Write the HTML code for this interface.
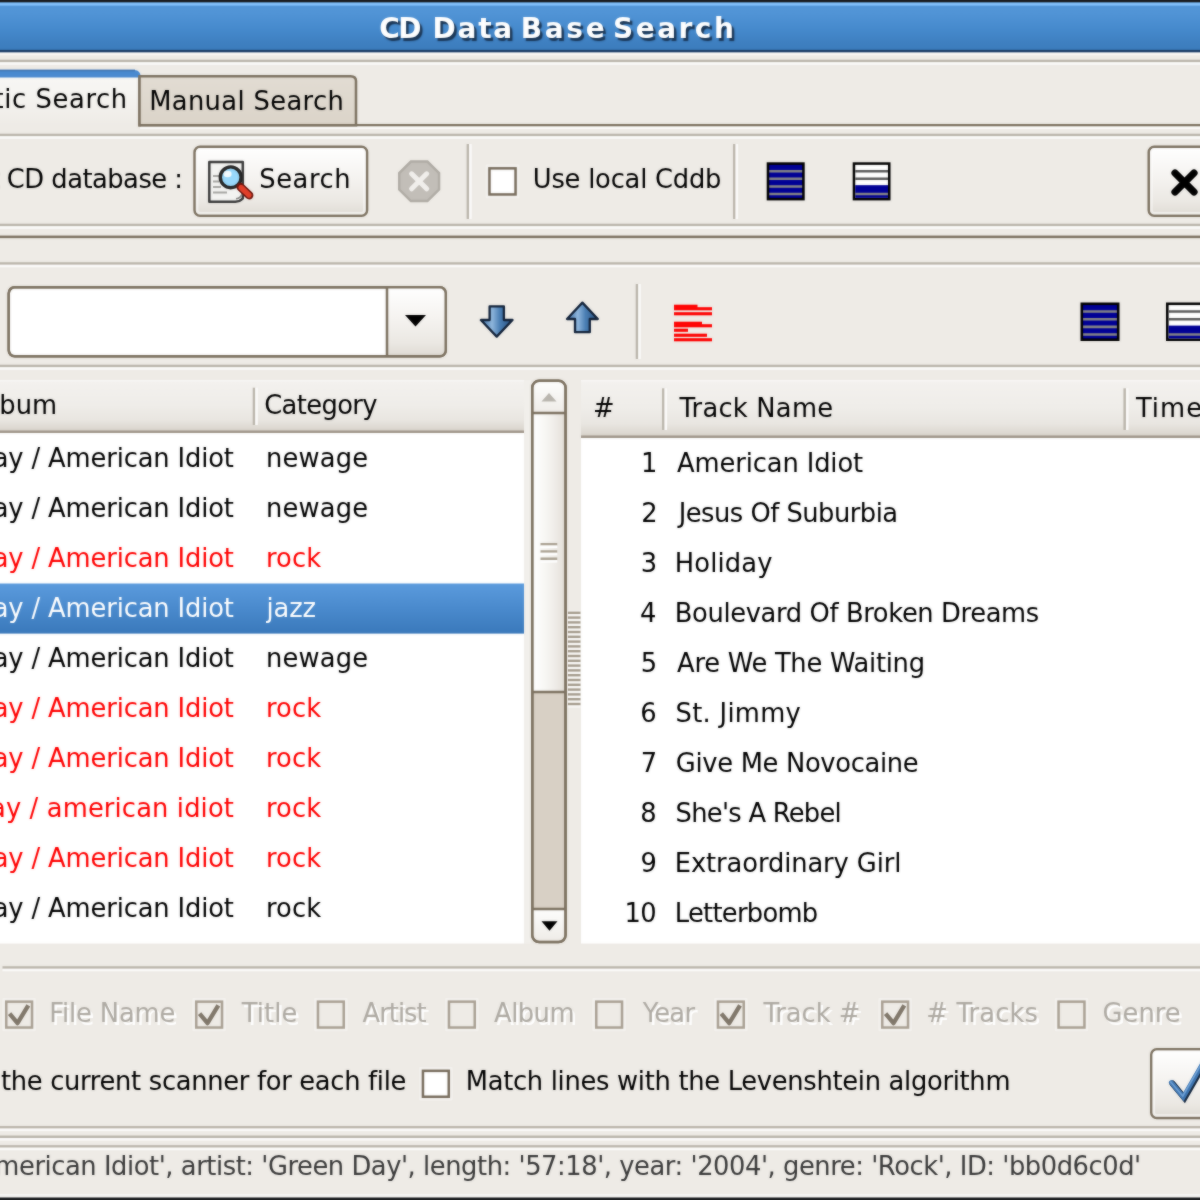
<!DOCTYPE html>
<html>
<head>
<meta charset="utf-8">
<title>CD Data Base Search</title>
<style>
html,body{margin:0;padding:0;background:#eeebe6;overflow:hidden;}
body{width:1200px;height:1200px;position:relative;}
#f,#f2{position:absolute;left:-50px;top:-50px;width:1300px;height:1300px;overflow:hidden;}
#f{filter:blur(0.8px);}
#f2{opacity:0.55;}
.w{position:absolute;left:50px;top:50px;width:480px;height:480px;transform:scale(2.5);transform-origin:0 0;}
.c{left:-20px;top:-20px;width:520px;height:520px;background:#eeebe6;overflow:hidden;}
.i{left:20px;top:20px;width:480px;height:480px;
  font-family:"DejaVu Sans","Liberation Sans",sans-serif;font-size:10.3px;line-height:16px;color:#000;}
.w div,.w svg{position:absolute;box-sizing:border-box;white-space:pre;}
.t span{white-space:pre;}
.t{height:16px;}
.dis{color:#aeaaa3;text-shadow:1px 1px 0 #fff;}
.r{color:#f00;}
.sel{color:#fff;}
</style>
</head>
<body>
<div id="f"><div class="w"><div class="c"><div class="i">
<svg width="480" height="480" viewBox="0 0 1200 1200" style="left:0;top:0;overflow:visible"><defs><linearGradient id="ag0" x1="0" y1="0" x2="0" y2="1"><stop offset="0" stop-color="#5497d8"/><stop offset="0.25" stop-color="#5194d6"/><stop offset="0.55" stop-color="#468acd"/><stop offset="0.8" stop-color="#3f80c1"/><stop offset="1" stop-color="#3b7bbb"/></linearGradient><linearGradient id="ag1" x1="0" y1="0" x2="0" y2="1"><stop offset="0" stop-color="#f8f7f5"/><stop offset="0.35" stop-color="#f6f5f2"/><stop offset="1" stop-color="#eeebe6"/></linearGradient><linearGradient id="ag2" x1="0" y1="0" x2="0" y2="1"><stop offset="0" stop-color="#e2dcd3"/><stop offset="1" stop-color="#dbd4c9"/></linearGradient><linearGradient id="ag3" x1="0" y1="0" x2="0" y2="1"><stop offset="0" stop-color="#ffffff"/><stop offset="0.45" stop-color="#f5f3f0"/><stop offset="0.8" stop-color="#ebe8e3"/><stop offset="1" stop-color="#dfdbd4"/></linearGradient><linearGradient id="ag4" x1="0" y1="0" x2="0" y2="1"><stop offset="0" stop-color="#ffffff"/><stop offset="0.45" stop-color="#f5f3f0"/><stop offset="0.8" stop-color="#ebe8e3"/><stop offset="1" stop-color="#dfdbd4"/></linearGradient><linearGradient id="ag5" x1="0" y1="0" x2="0" y2="1"><stop offset="0" stop-color="#ffffff"/><stop offset="0.45" stop-color="#f5f3f0"/><stop offset="0.8" stop-color="#ebe8e3"/><stop offset="1" stop-color="#dfdbd4"/></linearGradient><linearGradient id="ag6" x1="0" y1="0" x2="1" y2="0"><stop offset="0" stop-color="#3d6fa6"/><stop offset="0.35" stop-color="#8fb6dc"/><stop offset="0.6" stop-color="#4b7fb4"/><stop offset="1" stop-color="#28507f"/></linearGradient><linearGradient id="ag7" x1="0" y1="0" x2="0" y2="1"><stop offset="0" stop-color="#f9f8f7"/><stop offset="0.05" stop-color="#f3f1ee"/><stop offset="0.5" stop-color="#efede9"/><stop offset="0.78" stop-color="#e9e6e1"/><stop offset="1" stop-color="#d9d4cc"/></linearGradient><linearGradient id="ag8" x1="0" y1="0" x2="0" y2="1"><stop offset="0" stop-color="#5b9bdd"/><stop offset="0.5" stop-color="#4a8acd"/><stop offset="1" stop-color="#3a79bb"/></linearGradient><linearGradient id="ag9" x1="0" y1="0" x2="0" y2="1"><stop offset="0" stop-color="#fdfdfc"/><stop offset="1" stop-color="#efece8"/></linearGradient><linearGradient id="ag10" x1="0" y1="0" x2="1" y2="0"><stop offset="0" stop-color="#ffffff"/><stop offset="0.4" stop-color="#f7f6f3"/><stop offset="0.7" stop-color="#efece8"/><stop offset="1" stop-color="#e4e0d9"/></linearGradient><linearGradient id="ag11" x1="0" y1="0" x2="0" y2="1"><stop offset="0" stop-color="#f9f8f7"/><stop offset="0.05" stop-color="#f3f1ee"/><stop offset="0.5" stop-color="#efede9"/><stop offset="0.78" stop-color="#e9e6e1"/><stop offset="1" stop-color="#d9d4cc"/></linearGradient><linearGradient id="ag12" x1="0" y1="0" x2="0" y2="1"><stop offset="0" stop-color="#ffffff"/><stop offset="0.45" stop-color="#f5f3f0"/><stop offset="0.8" stop-color="#ebe8e3"/><stop offset="1" stop-color="#dfdbd4"/></linearGradient></defs>
<rect x="-50" y="0" width="1300" height="52.5" fill="url(#ag0)"/>
<rect x="-50" y="-50" width="1300" height="52.5" fill="#1a1c1f"/>
<rect x="-50" y="2.6" width="1300" height="3" fill="#82c0fb"/>
<rect x="-50" y="49.9" width="1300" height="2.6" fill="#1c3c64"/>
<rect x="-50" y="52.5" width="1300" height="2.7" fill="#fbf8f4"/>
<rect x="-50" y="59.75" width="1300" height="2.5" fill="#bab5ab"/><rect x="-50" y="62.25" width="1300" height="2.5" fill="#fcfbfa"/>
<rect x="140" y="124" width="1110" height="2.5" fill="#7d7261"/>
<rect x="140" y="126.5" width="1110" height="2.5" fill="#fcfbfa"/>
<path d="M-50 126.5V70H134.5Q140.75 70 140.75 76V126.5z" fill="url(#ag1)"/>
<path d="M-50 70H134.5Q140.75 70 140.75 77.5H-50z" fill="#4a8ad0"/>
<rect x="-50" y="69.6" width="185" height="1.8" fill="#3c74b3"/>
<rect x="138.25" y="77" width="2.5" height="49.5" fill="#7d7261"/>
<path d="M139.5 125.2V76.25H350.5Q356 76.25 356 81V125.2z" fill="url(#ag2)" stroke="#7d7261" stroke-width="2.5"/>
<rect x="-50" y="133.75" width="1300" height="2.5" fill="#bab5ab"/><rect x="-50" y="136.25" width="1300" height="2.5" fill="#fcfbfa"/>
<rect x="194.55" y="146.75" width="172.5" height="69" fill="url(#ag3)" stroke="#7d7261" stroke-width="2.5" rx="5.5"/><rect x="197.05" y="149.25" width="167.5" height="64" fill="none" stroke="#fff" stroke-opacity=".55" stroke-width="2.5" rx="3"/>
<path d="M209.3 162h33.5v36.5q-3 3.2-7.5 3.2h-26z" fill="#f3f3f1" stroke="#3a3a3a" stroke-width="2.5" stroke-linejoin="round"/><path d="M213 176h7M213 181.5h6M213 187h8M213 192.5h14" stroke="#a5a5a2" stroke-width="2"/><path d="M236 198.8q5-0.6 6.2-5.6" fill="none" stroke="#8a8a88" stroke-width="1.6"/><circle cx="230.7" cy="177.3" r="10.4" fill="#98d8fb" stroke="#262626" stroke-width="3.4"/><ellipse cx="227.6" cy="174" rx="4" ry="3.2" fill="#f2fbff"/><path d="M240.5 187l8.7 8.3" stroke="#6f150c" stroke-width="8.4" stroke-linecap="round"/><path d="M241 187.5l8 7.6" stroke="#e2402a" stroke-width="5.2" stroke-linecap="round"/>
<g transform="translate(397.3,159.6) scale(2.4278,2.4111)"><path d="M5.6 0.8h6.8l4.8 4.8v6.8l-4.8 4.8h-6.8l-4.8-4.8v-6.8z" fill="#c2beb8" stroke="#b0aca5" stroke-width="1"/><path d="M5.9 5.9l6.2 6.2M12.1 5.9l-6.2 6.2" stroke="#f1efec" stroke-width="2.1" stroke-linecap="round"/></g>
<rect x="466.65" y="144" width="2.5" height="75" fill="#bab5ab"/><rect x="469.15" y="144" width="2.5" height="75" fill="#fcfbfa"/>
<rect x="485.7" y="164.6" width="33.6" height="33.6" fill="#fff" rx="1" fill-opacity=".35"/><rect x="489.45" y="168.35" width="26.1" height="26.1" fill="#fff" stroke="#776c5c" stroke-width="2.5"/>
<rect x="733.05" y="144" width="2.5" height="75" fill="#bab5ab"/><rect x="735.55" y="144" width="2.5" height="75" fill="#fcfbfa"/>
<g transform="translate(766.7,162.3) scale(2.5333,2.5400)"><rect width="15" height="15" fill="#000"/><rect x="1" y="1" width="13" height="13" fill="#000096"/><path d="M1 3.5h13M1 6.5h13M1 9.5h13M1 12.5h13" stroke="#858585" stroke-width="1"/></g>
<g transform="translate(852.7,162.3) scale(2.5200,2.5400)"><rect width="15" height="15" fill="#000"/><rect x="1" y="1" width="13" height="13" fill="#fff"/><rect x="1" y="9" width="13" height="5" fill="#000096"/><path d="M1 3.5h13M1 6.5h13" stroke="#5a5a5a" stroke-width="1"/><path d="M1 12.5h13" stroke="#858585" stroke-width="1"/></g>
<rect x="1148.75" y="146.75" width="110" height="69" fill="url(#ag4)" stroke="#7d7261" stroke-width="2.5" rx="5.5"/><rect x="1151.25" y="149.25" width="105" height="64" fill="none" stroke="#fff" stroke-opacity=".55" stroke-width="2.5" rx="3"/>
<path d="M1175 173l19 19M1194 173l-19 19" stroke="#000" stroke-width="7.2" stroke-linecap="round"/>
<rect x="-50" y="223.75" width="1300" height="2.5" fill="#bab5ab"/><rect x="-50" y="226.25" width="1300" height="2.5" fill="#fcfbfa"/>
<rect x="-50" y="235.6" width="1300" height="2.5" fill="#7d7261"/>
<rect x="-50" y="262.25" width="1300" height="2.5" fill="#bab5ab"/><rect x="-50" y="264.75" width="1300" height="2.5" fill="#fcfbfa"/>
<rect x="8.75" y="287.25" width="437" height="69.1" fill="#fff" stroke="#7d7261" stroke-width="2.5" rx="6"/>
<path d="M387 287.2H439.5Q445.8 287.2 445.8 293V350.5Q445.8 356.4 439.5 356.4H387z" fill="url(#ag5)"/>
<rect x="385.75" y="287" width="2.5" height="69.6" fill="#7d7261"/>
<rect x="8.75" y="287.25" width="437" height="69.1" fill="none" stroke="#7d7261" stroke-width="2.5" rx="6"/>
<path d="M405 315h21l-10.5 11.6z" fill="#000"/>
<path d="M489.6 306.4h14.3v13.6h8.6l-15.8 16.6l-15.8-16.6h8.7z" fill="url(#ag6)" stroke="#13233a" stroke-width="2.3" stroke-linejoin="round"/>
<path d="M575 332.2h14.8v-13.2h8l-15.4-16.4l-15.4 16.4h8z" fill="url(#ag6)" stroke="#13233a" stroke-width="2.3" stroke-linejoin="round"/>
<rect x="635.75" y="284" width="2.5" height="75" fill="#bab5ab"/><rect x="638.25" y="284" width="2.5" height="75" fill="#fcfbfa"/>
<rect x="674" y="304.7" width="23.5" height="3.1" fill="#f00"/><rect x="674" y="307.2" width="38" height="3.1" fill="#f00"/><rect x="674" y="312.2" width="38" height="3.1" fill="#f00"/><rect x="674" y="321.7" width="28" height="3.1" fill="#f00"/><rect x="674" y="324.2" width="38" height="3.1" fill="#f00"/><rect x="674" y="328.7" width="14" height="3.1" fill="#f00"/><rect x="674" y="333.7" width="33" height="3.1" fill="#f00"/><rect x="674" y="338.2" width="38" height="3.1" fill="#f00"/>
<g transform="translate(1080.5,302.5) scale(2.6000,2.5667)"><rect width="15" height="15" fill="#000"/><rect x="1" y="1" width="13" height="13" fill="#000096"/><path d="M1 3.5h13M1 6.5h13M1 9.5h13M1 12.5h13" stroke="#858585" stroke-width="1"/></g>
<g transform="translate(1166,302.5) scale(2.6000,2.5667)"><rect width="15" height="15" fill="#000"/><rect x="1" y="1" width="13" height="13" fill="#fff"/><rect x="1" y="9" width="13" height="5" fill="#000096"/><path d="M1 3.5h13M1 6.5h13" stroke="#5a5a5a" stroke-width="1"/><path d="M1 12.5h13" stroke="#858585" stroke-width="1"/></g>
<rect x="-50" y="364.75" width="1300" height="2.5" fill="#bab5ab"/><rect x="-50" y="367.25" width="1300" height="2.5" fill="#fcfbfa"/>
<rect x="-50" y="380" width="574" height="563.5" fill="#fff"/>
<rect x="-50" y="380" width="574" height="51" fill="url(#ag7)"/>
<rect x="-50" y="430.5" width="574" height="2.5" fill="#a0968a"/>
<rect x="252.75" y="387.7" width="2.5" height="37.3" fill="#bab5ab"/><rect x="255.25" y="387.7" width="2.5" height="37.3" fill="#fcfbfa"/>
<rect x="-50" y="583.5" width="574" height="50.1" fill="url(#ag8)"/>
<rect x="524" y="380" width="7" height="563.5" fill="#f1efeb"/>
<rect x="532.25" y="380.75" width="33.3" height="561.3" fill="#d8d0c5" stroke="#7d7261" stroke-width="2.5" rx="7"/>
<path d="M533.5 413V387.5Q533.5 382 539 382H558.8Q564.3 382 564.3 387.5V413z" fill="url(#ag9)"/>
<rect x="533.5" y="413" width="30.8" height="279" fill="url(#ag10)"/>
<path d="M533.5 909V935.3Q533.5 940.8 539 940.8H558.8Q564.3 940.8 564.3 935.3V909z" fill="url(#ag9)"/>
<rect x="532" y="411.75" width="33.8" height="2.5" fill="#7d7261"/>
<rect x="532" y="690.75" width="33.8" height="2.5" fill="#7d7261"/>
<rect x="532" y="907.75" width="33.8" height="2.5" fill="#7d7261"/>
<rect x="532.25" y="380.75" width="33.3" height="561.3" fill="none" stroke="#7d7261" stroke-width="2.5" rx="7"/>
<path d="M541.5 401.5h15l-7.5-8.5z" fill="#b9b5ae"/>
<path d="M541.5 921.3h16l-8 9.5z" fill="#000"/>
<rect x="540.5" y="543" width="16.75" height="2.5" fill="#aaa192"/>
<rect x="540.5" y="545.5" width="16.75" height="2.5" fill="#fff"/>
<rect x="540.5" y="550.25" width="16.75" height="2.5" fill="#aaa192"/>
<rect x="540.5" y="552.75" width="16.75" height="2.5" fill="#fff"/>
<rect x="540.5" y="557.5" width="16.75" height="2.5" fill="#aaa192"/>
<rect x="540.5" y="560" width="16.75" height="2.5" fill="#fff"/>
<rect x="567.7" y="610.5" width="12.8" height="97" fill="#faf9f7"/>
<rect x="567.9" y="702.8" width="12.6" height="2.4" fill="#a49b8c"/>
<rect x="567.9" y="698" width="12.6" height="2.4" fill="#a49b8c"/>
<rect x="567.9" y="693.2" width="12.6" height="2.4" fill="#a49b8c"/>
<rect x="567.9" y="688.4" width="12.6" height="2.4" fill="#a49b8c"/>
<rect x="567.9" y="683.6" width="12.6" height="2.4" fill="#a49b8c"/>
<rect x="567.9" y="678.8" width="12.6" height="2.4" fill="#a49b8c"/>
<rect x="567.9" y="674" width="12.6" height="2.4" fill="#a49b8c"/>
<rect x="567.9" y="669.2" width="12.6" height="2.4" fill="#a49b8c"/>
<rect x="567.9" y="664.4" width="12.6" height="2.4" fill="#a49b8c"/>
<rect x="567.9" y="659.6" width="12.6" height="2.4" fill="#a49b8c"/>
<rect x="567.9" y="654.8" width="12.6" height="2.4" fill="#a49b8c"/>
<rect x="567.9" y="650" width="12.6" height="2.4" fill="#a49b8c"/>
<rect x="567.9" y="645.2" width="12.6" height="2.4" fill="#a49b8c"/>
<rect x="567.9" y="640.4" width="12.6" height="2.4" fill="#a49b8c"/>
<rect x="567.9" y="635.6" width="12.6" height="2.4" fill="#a49b8c"/>
<rect x="567.9" y="630.8" width="12.6" height="2.4" fill="#a49b8c"/>
<rect x="567.9" y="626" width="12.6" height="2.4" fill="#a49b8c"/>
<rect x="567.9" y="621.2" width="12.6" height="2.4" fill="#a49b8c"/>
<rect x="567.9" y="616.4" width="12.6" height="2.4" fill="#a49b8c"/>
<rect x="567.9" y="611.6" width="12.6" height="2.4" fill="#a49b8c"/>
<rect x="581" y="380" width="669" height="563.5" fill="#fff"/>
<rect x="581" y="380" width="669" height="56" fill="url(#ag11)"/>
<rect x="581" y="435.5" width="669" height="2.5" fill="#a0968a"/>
<rect x="662.05" y="388.3" width="2.5" height="41.7" fill="#bab5ab"/><rect x="664.55" y="388.3" width="2.5" height="41.7" fill="#fcfbfa"/>
<rect x="1123.45" y="388.3" width="2.5" height="41.7" fill="#bab5ab"/><rect x="1125.95" y="388.3" width="2.5" height="41.7" fill="#fcfbfa"/>
<rect x="2.5" y="966.25" width="1247.5" height="2.5" fill="#bab5ab"/><rect x="2.5" y="968.75" width="1247.5" height="2.5" fill="#fcfbfa"/>
<rect x="2.5" y="997.9" width="33.3" height="33.4" fill="#fff" rx="1" fill-opacity=".35"/><rect x="6.25" y="1001.65" width="25.8" height="25.9" fill="#eeebe6" stroke="#a9a093" stroke-width="2.5"/><path d="M9.6 1013.6l7.9 9.6l10.8-17.9" fill="none" stroke="#80776a" stroke-width="4.3" stroke-linejoin="round"/>
<rect x="192.5" y="997.9" width="33.3" height="33.4" fill="#fff" rx="1" fill-opacity=".35"/><rect x="196.25" y="1001.65" width="25.8" height="25.9" fill="#eeebe6" stroke="#a9a093" stroke-width="2.5"/><path d="M199.6 1013.6l7.9 9.6l10.8-17.9" fill="none" stroke="#80776a" stroke-width="4.3" stroke-linejoin="round"/>
<rect x="314.2" y="997.9" width="33.3" height="33.4" fill="#fff" rx="1" fill-opacity=".35"/><rect x="317.95" y="1001.65" width="25.8" height="25.9" fill="#eeebe6" stroke="#a9a093" stroke-width="2.5"/>
<rect x="445.2" y="997.9" width="33.3" height="33.4" fill="#fff" rx="1" fill-opacity=".35"/><rect x="448.95" y="1001.65" width="25.8" height="25.9" fill="#eeebe6" stroke="#a9a093" stroke-width="2.5"/>
<rect x="592.5" y="997.9" width="33.3" height="33.4" fill="#fff" rx="1" fill-opacity=".35"/><rect x="596.25" y="1001.65" width="25.8" height="25.9" fill="#eeebe6" stroke="#a9a093" stroke-width="2.5"/>
<rect x="714.2" y="997.9" width="33.3" height="33.4" fill="#fff" rx="1" fill-opacity=".35"/><rect x="717.95" y="1001.65" width="25.8" height="25.9" fill="#eeebe6" stroke="#a9a093" stroke-width="2.5"/><path d="M721.3 1013.6l7.9 9.6l10.8-17.9" fill="none" stroke="#80776a" stroke-width="4.3" stroke-linejoin="round"/>
<rect x="878.5" y="997.9" width="33.3" height="33.4" fill="#fff" rx="1" fill-opacity=".35"/><rect x="882.25" y="1001.65" width="25.8" height="25.9" fill="#eeebe6" stroke="#a9a093" stroke-width="2.5"/><path d="M885.6 1013.6l7.9 9.6l10.8-17.9" fill="none" stroke="#80776a" stroke-width="4.3" stroke-linejoin="round"/>
<rect x="1054.8" y="997.9" width="33.4" height="33.4" fill="#fff" rx="1" fill-opacity=".35"/><rect x="1058.55" y="1001.65" width="25.9" height="25.9" fill="#eeebe6" stroke="#a9a093" stroke-width="2.5"/>
<rect x="419.2" y="1067.1" width="33.3" height="33.4" fill="#fff" rx="1" fill-opacity=".35"/><rect x="422.95" y="1070.85" width="25.8" height="25.9" fill="#fff" stroke="#776c5c" stroke-width="2.5"/>
<rect x="1151.25" y="1049.25" width="107.5" height="68.7" fill="url(#ag12)" stroke="#7d7261" stroke-width="2.5" rx="5.5"/><rect x="1153.75" y="1051.75" width="102.5" height="63.7" fill="none" stroke="#fff" stroke-opacity=".55" stroke-width="2.5" rx="3"/>
<path d="M1172.5 1083.5l12 14.6l22-38" fill="none" stroke="#182a40" stroke-width="6" stroke-linecap="round" stroke-linejoin="miter"/><path d="M1171.3 1082.5l12 14.6l22-38" fill="none" stroke="#3f76b2" stroke-width="4.8" stroke-linecap="round" stroke-linejoin="miter"/><path d="M1170.8 1082l12 14l22-38" fill="none" stroke="#6d9fd3" stroke-width="1.6" stroke-linecap="round" stroke-linejoin="miter"/>
<rect x="-50" y="1126.05" width="1300" height="2.5" fill="#bab5ab"/><rect x="-50" y="1128.55" width="1300" height="2.5" fill="#fcfbfa"/>
<rect x="-50" y="1135.55" width="1300" height="2.5" fill="#bab5ab"/><rect x="-50" y="1138.05" width="1300" height="2.5" fill="#fcfbfa"/>
<rect x="-50" y="1145.15" width="1300" height="2.5" fill="#bab5ab"/><rect x="-50" y="1147.65" width="1300" height="2.5" fill="#fcfbfa"/>
<rect x="-50" y="1194" width="1300" height="3.5" fill="#f6f5f3"/>
<rect x="-50" y="1197.5" width="1300" height="52.5" fill="#1a1c1f"/>
</svg>
<div class="t" style="left:0;top:0;transform:translate(151.722px,4.320px);letter-spacing:0.5137px;color:#fff;text-shadow:1px 1px 0.5px #1a3554;font-size:11.2px;font-weight:bold;"><span style="letter-spacing:-0.6370px">CD</span><span style="display:inline-block;position:static;width:5.024px;letter-spacing:0"> </span><span style="letter-spacing:0.7247px">Data</span><span style="display:inline-block;position:static;width:2.687px;letter-spacing:0"> </span><span style="letter-spacing:1.0805px">Base</span><span style="display:inline-block;position:static;width:2.254px;letter-spacing:0"> </span><span style="letter-spacing:1.0093px">Search</span></div>
<div class="t" style="left:0;top:0;transform:translate(-44.340px,31.320px);letter-spacing:0.2487px;">Automatic Search</div>
<div class="t" style="left:0;top:0;transform:translate(59.669px,32.000px);letter-spacing:0.1507px;">Manual Search</div>
<div class="t" style="left:0;top:0;transform:translate(-40.758px,63.320px);letter-spacing:-0.2012px;">Request CD database :</div>
<div class="t" style="left:0;top:0;transform:translate(103.721px,63.320px);letter-spacing:0.2167px;">Search</div>
<div class="t" style="left:0;top:0;transform:translate(213.105px,63.320px);letter-spacing:-0.0861px;">Use local Cddb</div>
<div class="t" style="left:0;top:0;transform:translate(-47.958px,153.720px);letter-spacing:0.0184px;">Artist / Album</div>
<div class="t" style="left:0;top:0;transform:translate(105.702px,153.720px);letter-spacing:-0.2517px;">Category</div>
<div class="t" style="left:0;top:0;transform:translate(-44.908px,174.680px);letter-spacing:-0.0554px;">Green Day / American Idiot</div>
<div class="t" style="left:0;top:0;transform:translate(106.385px,174.680px);letter-spacing:0.0750px;">newage</div>
<div class="t" style="left:0;top:0;transform:translate(-44.908px,194.680px);letter-spacing:-0.0554px;">Green Day / American Idiot</div>
<div class="t" style="left:0;top:0;transform:translate(106.385px,194.680px);letter-spacing:0.0750px;">newage</div>
<div class="t r" style="left:0;top:0;transform:translate(-44.908px,214.680px);letter-spacing:-0.0554px;">Green Day / American Idiot</div>
<div class="t r" style="left:0;top:0;transform:translate(106.385px,214.680px);letter-spacing:0.0360px;">rock</div>
<div class="t sel" style="left:0;top:0;transform:translate(-44.908px,234.680px);letter-spacing:-0.0554px;">Green Day / American Idiot</div>
<div class="t sel" style="left:0;top:0;transform:translate(106.586px,234.680px);letter-spacing:-0.0426px;">jazz</div>
<div class="t" style="left:0;top:0;transform:translate(-44.908px,254.680px);letter-spacing:-0.0554px;">Green Day / American Idiot</div>
<div class="t" style="left:0;top:0;transform:translate(106.385px,254.680px);letter-spacing:0.0750px;">newage</div>
<div class="t r" style="left:0;top:0;transform:translate(-44.908px,274.680px);letter-spacing:-0.0554px;">Green Day / American Idiot</div>
<div class="t r" style="left:0;top:0;transform:translate(106.385px,274.680px);letter-spacing:0.0360px;">rock</div>
<div class="t r" style="left:0;top:0;transform:translate(-44.908px,294.680px);letter-spacing:-0.0554px;">Green Day / American Idiot</div>
<div class="t r" style="left:0;top:0;transform:translate(106.385px,294.680px);letter-spacing:0.0360px;">rock</div>
<div class="t r" style="left:0;top:0;transform:translate(-43.936px,314.680px);letter-spacing:0.0557px;">green day / american idiot</div>
<div class="t r" style="left:0;top:0;transform:translate(106.385px,314.680px);letter-spacing:0.0360px;">rock</div>
<div class="t r" style="left:0;top:0;transform:translate(-44.908px,334.680px);letter-spacing:-0.0554px;">Green Day / American Idiot</div>
<div class="t r" style="left:0;top:0;transform:translate(106.385px,334.680px);letter-spacing:0.0360px;">rock</div>
<div class="t" style="left:0;top:0;transform:translate(-44.908px,354.680px);letter-spacing:-0.0554px;">Green Day / American Idiot</div>
<div class="t" style="left:0;top:0;transform:translate(106.385px,354.680px);letter-spacing:0.0360px;">rock</div>
<div class="t" style="left:0;top:0;transform:translate(237.205px,154.680px);letter-spacing:0.0000px;">#</div>
<div class="t" style="left:0;top:0;transform:translate(271.750px,154.680px);letter-spacing:0.0965px;">Track Name</div>
<div class="t" style="left:0;top:0;transform:translate(454.350px,154.680px);letter-spacing:0.4250px;">Time</div>
<div class="t" style="left:0;top:0;transform:translate(256.388px,176.680px);letter-spacing:-0.2000px;">1</div>
<div class="t" style="left:0;top:0;transform:translate(270.840px,176.680px);letter-spacing:-0.0492px;">American Idiot</div>
<div class="t" style="left:0;top:0;transform:translate(256.469px,196.680px);letter-spacing:-0.2000px;">2</div>
<div class="t" style="left:0;top:0;transform:translate(271.453px,196.680px);letter-spacing:-0.1979px;">Jesus Of Suburbia</div>
<div class="t" style="left:0;top:0;transform:translate(256.262px,216.680px);letter-spacing:-0.2000px;">3</div>
<div class="t" style="left:0;top:0;transform:translate(269.909px,216.680px);letter-spacing:0.0598px;">Holiday</div>
<div class="t" style="left:0;top:0;transform:translate(256.016px,236.680px);letter-spacing:-0.2000px;">4</div>
<div class="t" style="left:0;top:0;transform:translate(269.909px,236.680px);letter-spacing:-0.1457px;">Boulevard Of Broken Dreams</div>
<div class="t" style="left:0;top:0;transform:translate(256.338px,256.680px);letter-spacing:-0.2000px;">5</div>
<div class="t" style="left:0;top:0;transform:translate(270.840px,256.680px);letter-spacing:-0.1036px;">Are We The Waiting</div>
<div class="t" style="left:0;top:0;transform:translate(256.086px,276.680px);letter-spacing:-0.2000px;">6</div>
<div class="t" style="left:0;top:0;transform:translate(270.241px,276.680px);letter-spacing:0.1117px;">St. Jimmy</div>
<div class="t" style="left:0;top:0;transform:translate(256.318px,296.680px);letter-spacing:-0.2000px;">7</div>
<div class="t" style="left:0;top:0;transform:translate(270.342px,296.680px);letter-spacing:-0.1249px;">Give Me Novocaine</div>
<div class="t" style="left:0;top:0;transform:translate(256.142px,316.680px);letter-spacing:-0.2000px;">8</div>
<div class="t" style="left:0;top:0;transform:translate(270.241px,316.680px);letter-spacing:-0.2924px;">She's A Rebel</div>
<div class="t" style="left:0;top:0;transform:translate(256.162px,336.680px);letter-spacing:-0.2000px;">9</div>
<div class="t" style="left:0;top:0;transform:translate(269.909px,336.680px);letter-spacing:-0.0386px;">Extraordinary Girl</div>
<div class="t" style="left:0;top:0;transform:translate(249.775px,356.680px);letter-spacing:-0.2000px;">10</div>
<div class="t" style="left:0;top:0;transform:translate(269.909px,356.680px);letter-spacing:-0.2893px;">Letterbomb</div>
<div class="t dis" style="left:0;top:0;transform:translate(19.669px,396.920px);letter-spacing:-0.0514px;">File Name</div>
<div class="t dis" style="left:0;top:0;transform:translate(96.710px,396.920px);letter-spacing:0.0400px;">Title</div>
<div class="t dis" style="left:0;top:0;transform:translate(145.000px,396.920px);letter-spacing:-0.3862px;">Artist</div>
<div class="t dis" style="left:0;top:0;transform:translate(197.640px,396.920px);letter-spacing:-0.2111px;">Album</div>
<div class="t dis" style="left:0;top:0;transform:translate(257.100px,396.920px);letter-spacing:-0.3042px;">Year</div>
<div class="t dis" style="left:0;top:0;transform:translate(305.350px,396.920px);letter-spacing:-0.0167px;">Track #</div>
<div class="t dis" style="left:0;top:0;transform:translate(370.525px,396.920px);letter-spacing:0.0627px;"># Tracks</div>
<div class="t dis" style="left:0;top:0;transform:translate(441.022px,396.920px);letter-spacing:0.0148px;">Genre</div>
<div class="t" style="left:0;top:0;transform:translate(-22.140px,424.000px);letter-spacing:-0.1219px;">Run the current scanner for each file</div>
<div class="t" style="left:0;top:0;transform:translate(186.309px,424.000px);letter-spacing:-0.1167px;">Match lines with the Levenshtein algorithm</div>
<div class="t" style="left:0;top:0;transform:translate(-50.301px,457.800px);letter-spacing:-0.1746px;color:#3a3a3a;">Album: 'American Idiot', artist: 'Green Day', length: '57:18', year: '2004', genre: 'Rock', ID: 'bb0d6c0d'</div>
</div></div></div></div>
<div id="f2"><div class="w"><div class="c"><div class="i">
<svg width="480" height="480" viewBox="0 0 1200 1200" style="left:0;top:0;overflow:visible"><defs><linearGradient id="bg0" x1="0" y1="0" x2="0" y2="1"><stop offset="0" stop-color="#5497d8"/><stop offset="0.25" stop-color="#5194d6"/><stop offset="0.55" stop-color="#468acd"/><stop offset="0.8" stop-color="#3f80c1"/><stop offset="1" stop-color="#3b7bbb"/></linearGradient><linearGradient id="bg1" x1="0" y1="0" x2="0" y2="1"><stop offset="0" stop-color="#f8f7f5"/><stop offset="0.35" stop-color="#f6f5f2"/><stop offset="1" stop-color="#eeebe6"/></linearGradient><linearGradient id="bg2" x1="0" y1="0" x2="0" y2="1"><stop offset="0" stop-color="#e2dcd3"/><stop offset="1" stop-color="#dbd4c9"/></linearGradient><linearGradient id="bg3" x1="0" y1="0" x2="0" y2="1"><stop offset="0" stop-color="#ffffff"/><stop offset="0.45" stop-color="#f5f3f0"/><stop offset="0.8" stop-color="#ebe8e3"/><stop offset="1" stop-color="#dfdbd4"/></linearGradient><linearGradient id="bg4" x1="0" y1="0" x2="0" y2="1"><stop offset="0" stop-color="#ffffff"/><stop offset="0.45" stop-color="#f5f3f0"/><stop offset="0.8" stop-color="#ebe8e3"/><stop offset="1" stop-color="#dfdbd4"/></linearGradient><linearGradient id="bg5" x1="0" y1="0" x2="0" y2="1"><stop offset="0" stop-color="#ffffff"/><stop offset="0.45" stop-color="#f5f3f0"/><stop offset="0.8" stop-color="#ebe8e3"/><stop offset="1" stop-color="#dfdbd4"/></linearGradient><linearGradient id="bg6" x1="0" y1="0" x2="1" y2="0"><stop offset="0" stop-color="#3d6fa6"/><stop offset="0.35" stop-color="#8fb6dc"/><stop offset="0.6" stop-color="#4b7fb4"/><stop offset="1" stop-color="#28507f"/></linearGradient><linearGradient id="bg7" x1="0" y1="0" x2="0" y2="1"><stop offset="0" stop-color="#f9f8f7"/><stop offset="0.05" stop-color="#f3f1ee"/><stop offset="0.5" stop-color="#efede9"/><stop offset="0.78" stop-color="#e9e6e1"/><stop offset="1" stop-color="#d9d4cc"/></linearGradient><linearGradient id="bg8" x1="0" y1="0" x2="0" y2="1"><stop offset="0" stop-color="#5b9bdd"/><stop offset="0.5" stop-color="#4a8acd"/><stop offset="1" stop-color="#3a79bb"/></linearGradient><linearGradient id="bg9" x1="0" y1="0" x2="0" y2="1"><stop offset="0" stop-color="#fdfdfc"/><stop offset="1" stop-color="#efece8"/></linearGradient><linearGradient id="bg10" x1="0" y1="0" x2="1" y2="0"><stop offset="0" stop-color="#ffffff"/><stop offset="0.4" stop-color="#f7f6f3"/><stop offset="0.7" stop-color="#efece8"/><stop offset="1" stop-color="#e4e0d9"/></linearGradient><linearGradient id="bg11" x1="0" y1="0" x2="0" y2="1"><stop offset="0" stop-color="#f9f8f7"/><stop offset="0.05" stop-color="#f3f1ee"/><stop offset="0.5" stop-color="#efede9"/><stop offset="0.78" stop-color="#e9e6e1"/><stop offset="1" stop-color="#d9d4cc"/></linearGradient><linearGradient id="bg12" x1="0" y1="0" x2="0" y2="1"><stop offset="0" stop-color="#ffffff"/><stop offset="0.45" stop-color="#f5f3f0"/><stop offset="0.8" stop-color="#ebe8e3"/><stop offset="1" stop-color="#dfdbd4"/></linearGradient></defs>
<rect x="-50" y="0" width="1300" height="52.5" fill="url(#bg0)"/>
<rect x="-50" y="-50" width="1300" height="52.5" fill="#1a1c1f"/>
<rect x="-50" y="2.6" width="1300" height="3" fill="#82c0fb"/>
<rect x="-50" y="49.9" width="1300" height="2.6" fill="#1c3c64"/>
<rect x="-50" y="52.5" width="1300" height="2.7" fill="#fbf8f4"/>
<rect x="-50" y="59.75" width="1300" height="2.5" fill="#bab5ab"/><rect x="-50" y="62.25" width="1300" height="2.5" fill="#fcfbfa"/>
<rect x="140" y="124" width="1110" height="2.5" fill="#7d7261"/>
<rect x="140" y="126.5" width="1110" height="2.5" fill="#fcfbfa"/>
<path d="M-50 126.5V70H134.5Q140.75 70 140.75 76V126.5z" fill="url(#bg1)"/>
<path d="M-50 70H134.5Q140.75 70 140.75 77.5H-50z" fill="#4a8ad0"/>
<rect x="-50" y="69.6" width="185" height="1.8" fill="#3c74b3"/>
<rect x="138.25" y="77" width="2.5" height="49.5" fill="#7d7261"/>
<path d="M139.5 125.2V76.25H350.5Q356 76.25 356 81V125.2z" fill="url(#bg2)" stroke="#7d7261" stroke-width="2.5"/>
<rect x="-50" y="133.75" width="1300" height="2.5" fill="#bab5ab"/><rect x="-50" y="136.25" width="1300" height="2.5" fill="#fcfbfa"/>
<rect x="194.55" y="146.75" width="172.5" height="69" fill="url(#bg3)" stroke="#7d7261" stroke-width="2.5" rx="5.5"/><rect x="197.05" y="149.25" width="167.5" height="64" fill="none" stroke="#fff" stroke-opacity=".55" stroke-width="2.5" rx="3"/>
<path d="M209.3 162h33.5v36.5q-3 3.2-7.5 3.2h-26z" fill="#f3f3f1" stroke="#3a3a3a" stroke-width="2.5" stroke-linejoin="round"/><path d="M213 176h7M213 181.5h6M213 187h8M213 192.5h14" stroke="#a5a5a2" stroke-width="2"/><path d="M236 198.8q5-0.6 6.2-5.6" fill="none" stroke="#8a8a88" stroke-width="1.6"/><circle cx="230.7" cy="177.3" r="10.4" fill="#98d8fb" stroke="#262626" stroke-width="3.4"/><ellipse cx="227.6" cy="174" rx="4" ry="3.2" fill="#f2fbff"/><path d="M240.5 187l8.7 8.3" stroke="#6f150c" stroke-width="8.4" stroke-linecap="round"/><path d="M241 187.5l8 7.6" stroke="#e2402a" stroke-width="5.2" stroke-linecap="round"/>
<g transform="translate(397.3,159.6) scale(2.4278,2.4111)"><path d="M5.6 0.8h6.8l4.8 4.8v6.8l-4.8 4.8h-6.8l-4.8-4.8v-6.8z" fill="#c2beb8" stroke="#b0aca5" stroke-width="1"/><path d="M5.9 5.9l6.2 6.2M12.1 5.9l-6.2 6.2" stroke="#f1efec" stroke-width="2.1" stroke-linecap="round"/></g>
<rect x="466.65" y="144" width="2.5" height="75" fill="#bab5ab"/><rect x="469.15" y="144" width="2.5" height="75" fill="#fcfbfa"/>
<rect x="485.7" y="164.6" width="33.6" height="33.6" fill="#fff" rx="1" fill-opacity=".35"/><rect x="489.45" y="168.35" width="26.1" height="26.1" fill="#fff" stroke="#776c5c" stroke-width="2.5"/>
<rect x="733.05" y="144" width="2.5" height="75" fill="#bab5ab"/><rect x="735.55" y="144" width="2.5" height="75" fill="#fcfbfa"/>
<g transform="translate(766.7,162.3) scale(2.5333,2.5400)"><rect width="15" height="15" fill="#000"/><rect x="1" y="1" width="13" height="13" fill="#000096"/><path d="M1 3.5h13M1 6.5h13M1 9.5h13M1 12.5h13" stroke="#858585" stroke-width="1"/></g>
<g transform="translate(852.7,162.3) scale(2.5200,2.5400)"><rect width="15" height="15" fill="#000"/><rect x="1" y="1" width="13" height="13" fill="#fff"/><rect x="1" y="9" width="13" height="5" fill="#000096"/><path d="M1 3.5h13M1 6.5h13" stroke="#5a5a5a" stroke-width="1"/><path d="M1 12.5h13" stroke="#858585" stroke-width="1"/></g>
<rect x="1148.75" y="146.75" width="110" height="69" fill="url(#bg4)" stroke="#7d7261" stroke-width="2.5" rx="5.5"/><rect x="1151.25" y="149.25" width="105" height="64" fill="none" stroke="#fff" stroke-opacity=".55" stroke-width="2.5" rx="3"/>
<path d="M1175 173l19 19M1194 173l-19 19" stroke="#000" stroke-width="7.2" stroke-linecap="round"/>
<rect x="-50" y="223.75" width="1300" height="2.5" fill="#bab5ab"/><rect x="-50" y="226.25" width="1300" height="2.5" fill="#fcfbfa"/>
<rect x="-50" y="235.6" width="1300" height="2.5" fill="#7d7261"/>
<rect x="-50" y="262.25" width="1300" height="2.5" fill="#bab5ab"/><rect x="-50" y="264.75" width="1300" height="2.5" fill="#fcfbfa"/>
<rect x="8.75" y="287.25" width="437" height="69.1" fill="#fff" stroke="#7d7261" stroke-width="2.5" rx="6"/>
<path d="M387 287.2H439.5Q445.8 287.2 445.8 293V350.5Q445.8 356.4 439.5 356.4H387z" fill="url(#bg5)"/>
<rect x="385.75" y="287" width="2.5" height="69.6" fill="#7d7261"/>
<rect x="8.75" y="287.25" width="437" height="69.1" fill="none" stroke="#7d7261" stroke-width="2.5" rx="6"/>
<path d="M405 315h21l-10.5 11.6z" fill="#000"/>
<path d="M489.6 306.4h14.3v13.6h8.6l-15.8 16.6l-15.8-16.6h8.7z" fill="url(#bg6)" stroke="#13233a" stroke-width="2.3" stroke-linejoin="round"/>
<path d="M575 332.2h14.8v-13.2h8l-15.4-16.4l-15.4 16.4h8z" fill="url(#bg6)" stroke="#13233a" stroke-width="2.3" stroke-linejoin="round"/>
<rect x="635.75" y="284" width="2.5" height="75" fill="#bab5ab"/><rect x="638.25" y="284" width="2.5" height="75" fill="#fcfbfa"/>
<rect x="674" y="304.7" width="23.5" height="3.1" fill="#f00"/><rect x="674" y="307.2" width="38" height="3.1" fill="#f00"/><rect x="674" y="312.2" width="38" height="3.1" fill="#f00"/><rect x="674" y="321.7" width="28" height="3.1" fill="#f00"/><rect x="674" y="324.2" width="38" height="3.1" fill="#f00"/><rect x="674" y="328.7" width="14" height="3.1" fill="#f00"/><rect x="674" y="333.7" width="33" height="3.1" fill="#f00"/><rect x="674" y="338.2" width="38" height="3.1" fill="#f00"/>
<g transform="translate(1080.5,302.5) scale(2.6000,2.5667)"><rect width="15" height="15" fill="#000"/><rect x="1" y="1" width="13" height="13" fill="#000096"/><path d="M1 3.5h13M1 6.5h13M1 9.5h13M1 12.5h13" stroke="#858585" stroke-width="1"/></g>
<g transform="translate(1166,302.5) scale(2.6000,2.5667)"><rect width="15" height="15" fill="#000"/><rect x="1" y="1" width="13" height="13" fill="#fff"/><rect x="1" y="9" width="13" height="5" fill="#000096"/><path d="M1 3.5h13M1 6.5h13" stroke="#5a5a5a" stroke-width="1"/><path d="M1 12.5h13" stroke="#858585" stroke-width="1"/></g>
<rect x="-50" y="364.75" width="1300" height="2.5" fill="#bab5ab"/><rect x="-50" y="367.25" width="1300" height="2.5" fill="#fcfbfa"/>
<rect x="-50" y="380" width="574" height="563.5" fill="#fff"/>
<rect x="-50" y="380" width="574" height="51" fill="url(#bg7)"/>
<rect x="-50" y="430.5" width="574" height="2.5" fill="#a0968a"/>
<rect x="252.75" y="387.7" width="2.5" height="37.3" fill="#bab5ab"/><rect x="255.25" y="387.7" width="2.5" height="37.3" fill="#fcfbfa"/>
<rect x="-50" y="583.5" width="574" height="50.1" fill="url(#bg8)"/>
<rect x="524" y="380" width="7" height="563.5" fill="#f1efeb"/>
<rect x="532.25" y="380.75" width="33.3" height="561.3" fill="#d8d0c5" stroke="#7d7261" stroke-width="2.5" rx="7"/>
<path d="M533.5 413V387.5Q533.5 382 539 382H558.8Q564.3 382 564.3 387.5V413z" fill="url(#bg9)"/>
<rect x="533.5" y="413" width="30.8" height="279" fill="url(#bg10)"/>
<path d="M533.5 909V935.3Q533.5 940.8 539 940.8H558.8Q564.3 940.8 564.3 935.3V909z" fill="url(#bg9)"/>
<rect x="532" y="411.75" width="33.8" height="2.5" fill="#7d7261"/>
<rect x="532" y="690.75" width="33.8" height="2.5" fill="#7d7261"/>
<rect x="532" y="907.75" width="33.8" height="2.5" fill="#7d7261"/>
<rect x="532.25" y="380.75" width="33.3" height="561.3" fill="none" stroke="#7d7261" stroke-width="2.5" rx="7"/>
<path d="M541.5 401.5h15l-7.5-8.5z" fill="#b9b5ae"/>
<path d="M541.5 921.3h16l-8 9.5z" fill="#000"/>
<rect x="540.5" y="543" width="16.75" height="2.5" fill="#aaa192"/>
<rect x="540.5" y="545.5" width="16.75" height="2.5" fill="#fff"/>
<rect x="540.5" y="550.25" width="16.75" height="2.5" fill="#aaa192"/>
<rect x="540.5" y="552.75" width="16.75" height="2.5" fill="#fff"/>
<rect x="540.5" y="557.5" width="16.75" height="2.5" fill="#aaa192"/>
<rect x="540.5" y="560" width="16.75" height="2.5" fill="#fff"/>
<rect x="567.7" y="610.5" width="12.8" height="97" fill="#faf9f7"/>
<rect x="567.9" y="702.8" width="12.6" height="2.4" fill="#a49b8c"/>
<rect x="567.9" y="698" width="12.6" height="2.4" fill="#a49b8c"/>
<rect x="567.9" y="693.2" width="12.6" height="2.4" fill="#a49b8c"/>
<rect x="567.9" y="688.4" width="12.6" height="2.4" fill="#a49b8c"/>
<rect x="567.9" y="683.6" width="12.6" height="2.4" fill="#a49b8c"/>
<rect x="567.9" y="678.8" width="12.6" height="2.4" fill="#a49b8c"/>
<rect x="567.9" y="674" width="12.6" height="2.4" fill="#a49b8c"/>
<rect x="567.9" y="669.2" width="12.6" height="2.4" fill="#a49b8c"/>
<rect x="567.9" y="664.4" width="12.6" height="2.4" fill="#a49b8c"/>
<rect x="567.9" y="659.6" width="12.6" height="2.4" fill="#a49b8c"/>
<rect x="567.9" y="654.8" width="12.6" height="2.4" fill="#a49b8c"/>
<rect x="567.9" y="650" width="12.6" height="2.4" fill="#a49b8c"/>
<rect x="567.9" y="645.2" width="12.6" height="2.4" fill="#a49b8c"/>
<rect x="567.9" y="640.4" width="12.6" height="2.4" fill="#a49b8c"/>
<rect x="567.9" y="635.6" width="12.6" height="2.4" fill="#a49b8c"/>
<rect x="567.9" y="630.8" width="12.6" height="2.4" fill="#a49b8c"/>
<rect x="567.9" y="626" width="12.6" height="2.4" fill="#a49b8c"/>
<rect x="567.9" y="621.2" width="12.6" height="2.4" fill="#a49b8c"/>
<rect x="567.9" y="616.4" width="12.6" height="2.4" fill="#a49b8c"/>
<rect x="567.9" y="611.6" width="12.6" height="2.4" fill="#a49b8c"/>
<rect x="581" y="380" width="669" height="563.5" fill="#fff"/>
<rect x="581" y="380" width="669" height="56" fill="url(#bg11)"/>
<rect x="581" y="435.5" width="669" height="2.5" fill="#a0968a"/>
<rect x="662.05" y="388.3" width="2.5" height="41.7" fill="#bab5ab"/><rect x="664.55" y="388.3" width="2.5" height="41.7" fill="#fcfbfa"/>
<rect x="1123.45" y="388.3" width="2.5" height="41.7" fill="#bab5ab"/><rect x="1125.95" y="388.3" width="2.5" height="41.7" fill="#fcfbfa"/>
<rect x="2.5" y="966.25" width="1247.5" height="2.5" fill="#bab5ab"/><rect x="2.5" y="968.75" width="1247.5" height="2.5" fill="#fcfbfa"/>
<rect x="2.5" y="997.9" width="33.3" height="33.4" fill="#fff" rx="1" fill-opacity=".35"/><rect x="6.25" y="1001.65" width="25.8" height="25.9" fill="#eeebe6" stroke="#a9a093" stroke-width="2.5"/><path d="M9.6 1013.6l7.9 9.6l10.8-17.9" fill="none" stroke="#80776a" stroke-width="4.3" stroke-linejoin="round"/>
<rect x="192.5" y="997.9" width="33.3" height="33.4" fill="#fff" rx="1" fill-opacity=".35"/><rect x="196.25" y="1001.65" width="25.8" height="25.9" fill="#eeebe6" stroke="#a9a093" stroke-width="2.5"/><path d="M199.6 1013.6l7.9 9.6l10.8-17.9" fill="none" stroke="#80776a" stroke-width="4.3" stroke-linejoin="round"/>
<rect x="314.2" y="997.9" width="33.3" height="33.4" fill="#fff" rx="1" fill-opacity=".35"/><rect x="317.95" y="1001.65" width="25.8" height="25.9" fill="#eeebe6" stroke="#a9a093" stroke-width="2.5"/>
<rect x="445.2" y="997.9" width="33.3" height="33.4" fill="#fff" rx="1" fill-opacity=".35"/><rect x="448.95" y="1001.65" width="25.8" height="25.9" fill="#eeebe6" stroke="#a9a093" stroke-width="2.5"/>
<rect x="592.5" y="997.9" width="33.3" height="33.4" fill="#fff" rx="1" fill-opacity=".35"/><rect x="596.25" y="1001.65" width="25.8" height="25.9" fill="#eeebe6" stroke="#a9a093" stroke-width="2.5"/>
<rect x="714.2" y="997.9" width="33.3" height="33.4" fill="#fff" rx="1" fill-opacity=".35"/><rect x="717.95" y="1001.65" width="25.8" height="25.9" fill="#eeebe6" stroke="#a9a093" stroke-width="2.5"/><path d="M721.3 1013.6l7.9 9.6l10.8-17.9" fill="none" stroke="#80776a" stroke-width="4.3" stroke-linejoin="round"/>
<rect x="878.5" y="997.9" width="33.3" height="33.4" fill="#fff" rx="1" fill-opacity=".35"/><rect x="882.25" y="1001.65" width="25.8" height="25.9" fill="#eeebe6" stroke="#a9a093" stroke-width="2.5"/><path d="M885.6 1013.6l7.9 9.6l10.8-17.9" fill="none" stroke="#80776a" stroke-width="4.3" stroke-linejoin="round"/>
<rect x="1054.8" y="997.9" width="33.4" height="33.4" fill="#fff" rx="1" fill-opacity=".35"/><rect x="1058.55" y="1001.65" width="25.9" height="25.9" fill="#eeebe6" stroke="#a9a093" stroke-width="2.5"/>
<rect x="419.2" y="1067.1" width="33.3" height="33.4" fill="#fff" rx="1" fill-opacity=".35"/><rect x="422.95" y="1070.85" width="25.8" height="25.9" fill="#fff" stroke="#776c5c" stroke-width="2.5"/>
<rect x="1151.25" y="1049.25" width="107.5" height="68.7" fill="url(#bg12)" stroke="#7d7261" stroke-width="2.5" rx="5.5"/><rect x="1153.75" y="1051.75" width="102.5" height="63.7" fill="none" stroke="#fff" stroke-opacity=".55" stroke-width="2.5" rx="3"/>
<path d="M1172.5 1083.5l12 14.6l22-38" fill="none" stroke="#182a40" stroke-width="6" stroke-linecap="round" stroke-linejoin="miter"/><path d="M1171.3 1082.5l12 14.6l22-38" fill="none" stroke="#3f76b2" stroke-width="4.8" stroke-linecap="round" stroke-linejoin="miter"/><path d="M1170.8 1082l12 14l22-38" fill="none" stroke="#6d9fd3" stroke-width="1.6" stroke-linecap="round" stroke-linejoin="miter"/>
<rect x="-50" y="1126.05" width="1300" height="2.5" fill="#bab5ab"/><rect x="-50" y="1128.55" width="1300" height="2.5" fill="#fcfbfa"/>
<rect x="-50" y="1135.55" width="1300" height="2.5" fill="#bab5ab"/><rect x="-50" y="1138.05" width="1300" height="2.5" fill="#fcfbfa"/>
<rect x="-50" y="1145.15" width="1300" height="2.5" fill="#bab5ab"/><rect x="-50" y="1147.65" width="1300" height="2.5" fill="#fcfbfa"/>
<rect x="-50" y="1194" width="1300" height="3.5" fill="#f6f5f3"/>
<rect x="-50" y="1197.5" width="1300" height="52.5" fill="#1a1c1f"/>
</svg>
<div class="t" style="left:0;top:0;transform:translate(151.722px,4.320px);letter-spacing:0.5137px;color:#fff;text-shadow:1px 1px 0.5px #1a3554;font-size:11.2px;font-weight:bold;"><span style="letter-spacing:-0.6370px">CD</span><span style="display:inline-block;position:static;width:5.024px;letter-spacing:0"> </span><span style="letter-spacing:0.7247px">Data</span><span style="display:inline-block;position:static;width:2.687px;letter-spacing:0"> </span><span style="letter-spacing:1.0805px">Base</span><span style="display:inline-block;position:static;width:2.254px;letter-spacing:0"> </span><span style="letter-spacing:1.0093px">Search</span></div>
<div class="t" style="left:0;top:0;transform:translate(-44.340px,31.320px);letter-spacing:0.2487px;">Automatic Search</div>
<div class="t" style="left:0;top:0;transform:translate(59.669px,32.000px);letter-spacing:0.1507px;">Manual Search</div>
<div class="t" style="left:0;top:0;transform:translate(-40.758px,63.320px);letter-spacing:-0.2012px;">Request CD database :</div>
<div class="t" style="left:0;top:0;transform:translate(103.721px,63.320px);letter-spacing:0.2167px;">Search</div>
<div class="t" style="left:0;top:0;transform:translate(213.105px,63.320px);letter-spacing:-0.0861px;">Use local Cddb</div>
<div class="t" style="left:0;top:0;transform:translate(-47.958px,153.720px);letter-spacing:0.0184px;">Artist / Album</div>
<div class="t" style="left:0;top:0;transform:translate(105.702px,153.720px);letter-spacing:-0.2517px;">Category</div>
<div class="t" style="left:0;top:0;transform:translate(-44.908px,174.680px);letter-spacing:-0.0554px;">Green Day / American Idiot</div>
<div class="t" style="left:0;top:0;transform:translate(106.385px,174.680px);letter-spacing:0.0750px;">newage</div>
<div class="t" style="left:0;top:0;transform:translate(-44.908px,194.680px);letter-spacing:-0.0554px;">Green Day / American Idiot</div>
<div class="t" style="left:0;top:0;transform:translate(106.385px,194.680px);letter-spacing:0.0750px;">newage</div>
<div class="t r" style="left:0;top:0;transform:translate(-44.908px,214.680px);letter-spacing:-0.0554px;">Green Day / American Idiot</div>
<div class="t r" style="left:0;top:0;transform:translate(106.385px,214.680px);letter-spacing:0.0360px;">rock</div>
<div class="t sel" style="left:0;top:0;transform:translate(-44.908px,234.680px);letter-spacing:-0.0554px;">Green Day / American Idiot</div>
<div class="t sel" style="left:0;top:0;transform:translate(106.586px,234.680px);letter-spacing:-0.0426px;">jazz</div>
<div class="t" style="left:0;top:0;transform:translate(-44.908px,254.680px);letter-spacing:-0.0554px;">Green Day / American Idiot</div>
<div class="t" style="left:0;top:0;transform:translate(106.385px,254.680px);letter-spacing:0.0750px;">newage</div>
<div class="t r" style="left:0;top:0;transform:translate(-44.908px,274.680px);letter-spacing:-0.0554px;">Green Day / American Idiot</div>
<div class="t r" style="left:0;top:0;transform:translate(106.385px,274.680px);letter-spacing:0.0360px;">rock</div>
<div class="t r" style="left:0;top:0;transform:translate(-44.908px,294.680px);letter-spacing:-0.0554px;">Green Day / American Idiot</div>
<div class="t r" style="left:0;top:0;transform:translate(106.385px,294.680px);letter-spacing:0.0360px;">rock</div>
<div class="t r" style="left:0;top:0;transform:translate(-43.936px,314.680px);letter-spacing:0.0557px;">green day / american idiot</div>
<div class="t r" style="left:0;top:0;transform:translate(106.385px,314.680px);letter-spacing:0.0360px;">rock</div>
<div class="t r" style="left:0;top:0;transform:translate(-44.908px,334.680px);letter-spacing:-0.0554px;">Green Day / American Idiot</div>
<div class="t r" style="left:0;top:0;transform:translate(106.385px,334.680px);letter-spacing:0.0360px;">rock</div>
<div class="t" style="left:0;top:0;transform:translate(-44.908px,354.680px);letter-spacing:-0.0554px;">Green Day / American Idiot</div>
<div class="t" style="left:0;top:0;transform:translate(106.385px,354.680px);letter-spacing:0.0360px;">rock</div>
<div class="t" style="left:0;top:0;transform:translate(237.205px,154.680px);letter-spacing:0.0000px;">#</div>
<div class="t" style="left:0;top:0;transform:translate(271.750px,154.680px);letter-spacing:0.0965px;">Track Name</div>
<div class="t" style="left:0;top:0;transform:translate(454.350px,154.680px);letter-spacing:0.4250px;">Time</div>
<div class="t" style="left:0;top:0;transform:translate(256.388px,176.680px);letter-spacing:-0.2000px;">1</div>
<div class="t" style="left:0;top:0;transform:translate(270.840px,176.680px);letter-spacing:-0.0492px;">American Idiot</div>
<div class="t" style="left:0;top:0;transform:translate(256.469px,196.680px);letter-spacing:-0.2000px;">2</div>
<div class="t" style="left:0;top:0;transform:translate(271.453px,196.680px);letter-spacing:-0.1979px;">Jesus Of Suburbia</div>
<div class="t" style="left:0;top:0;transform:translate(256.262px,216.680px);letter-spacing:-0.2000px;">3</div>
<div class="t" style="left:0;top:0;transform:translate(269.909px,216.680px);letter-spacing:0.0598px;">Holiday</div>
<div class="t" style="left:0;top:0;transform:translate(256.016px,236.680px);letter-spacing:-0.2000px;">4</div>
<div class="t" style="left:0;top:0;transform:translate(269.909px,236.680px);letter-spacing:-0.1457px;">Boulevard Of Broken Dreams</div>
<div class="t" style="left:0;top:0;transform:translate(256.338px,256.680px);letter-spacing:-0.2000px;">5</div>
<div class="t" style="left:0;top:0;transform:translate(270.840px,256.680px);letter-spacing:-0.1036px;">Are We The Waiting</div>
<div class="t" style="left:0;top:0;transform:translate(256.086px,276.680px);letter-spacing:-0.2000px;">6</div>
<div class="t" style="left:0;top:0;transform:translate(270.241px,276.680px);letter-spacing:0.1117px;">St. Jimmy</div>
<div class="t" style="left:0;top:0;transform:translate(256.318px,296.680px);letter-spacing:-0.2000px;">7</div>
<div class="t" style="left:0;top:0;transform:translate(270.342px,296.680px);letter-spacing:-0.1249px;">Give Me Novocaine</div>
<div class="t" style="left:0;top:0;transform:translate(256.142px,316.680px);letter-spacing:-0.2000px;">8</div>
<div class="t" style="left:0;top:0;transform:translate(270.241px,316.680px);letter-spacing:-0.2924px;">She's A Rebel</div>
<div class="t" style="left:0;top:0;transform:translate(256.162px,336.680px);letter-spacing:-0.2000px;">9</div>
<div class="t" style="left:0;top:0;transform:translate(269.909px,336.680px);letter-spacing:-0.0386px;">Extraordinary Girl</div>
<div class="t" style="left:0;top:0;transform:translate(249.775px,356.680px);letter-spacing:-0.2000px;">10</div>
<div class="t" style="left:0;top:0;transform:translate(269.909px,356.680px);letter-spacing:-0.2893px;">Letterbomb</div>
<div class="t dis" style="left:0;top:0;transform:translate(19.669px,396.920px);letter-spacing:-0.0514px;">File Name</div>
<div class="t dis" style="left:0;top:0;transform:translate(96.710px,396.920px);letter-spacing:0.0400px;">Title</div>
<div class="t dis" style="left:0;top:0;transform:translate(145.000px,396.920px);letter-spacing:-0.3862px;">Artist</div>
<div class="t dis" style="left:0;top:0;transform:translate(197.640px,396.920px);letter-spacing:-0.2111px;">Album</div>
<div class="t dis" style="left:0;top:0;transform:translate(257.100px,396.920px);letter-spacing:-0.3042px;">Year</div>
<div class="t dis" style="left:0;top:0;transform:translate(305.350px,396.920px);letter-spacing:-0.0167px;">Track #</div>
<div class="t dis" style="left:0;top:0;transform:translate(370.525px,396.920px);letter-spacing:0.0627px;"># Tracks</div>
<div class="t dis" style="left:0;top:0;transform:translate(441.022px,396.920px);letter-spacing:0.0148px;">Genre</div>
<div class="t" style="left:0;top:0;transform:translate(-22.140px,424.000px);letter-spacing:-0.1219px;">Run the current scanner for each file</div>
<div class="t" style="left:0;top:0;transform:translate(186.309px,424.000px);letter-spacing:-0.1167px;">Match lines with the Levenshtein algorithm</div>
<div class="t" style="left:0;top:0;transform:translate(-50.301px,457.800px);letter-spacing:-0.1746px;color:#3a3a3a;">Album: 'American Idiot', artist: 'Green Day', length: '57:18', year: '2004', genre: 'Rock', ID: 'bb0d6c0d'</div>
</div></div></div></div>
</body>
</html>
